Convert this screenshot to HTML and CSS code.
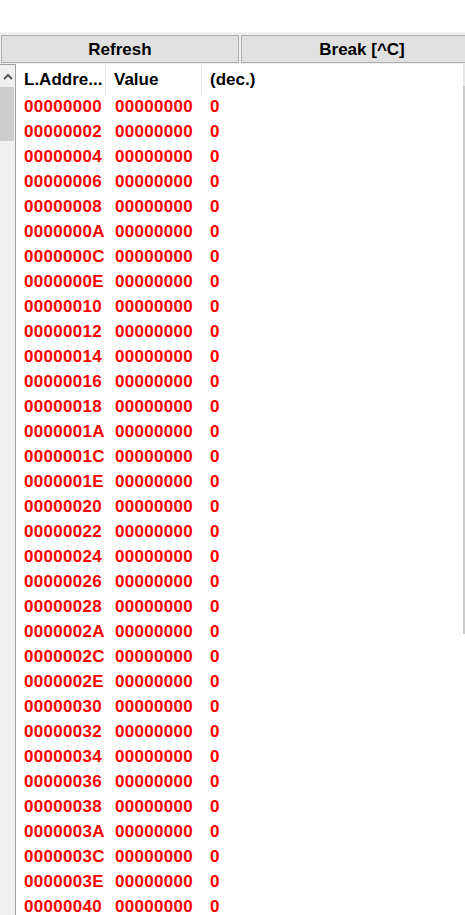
FILE: index.html
```html
<!DOCTYPE html>
<html>
<head>
<meta charset="utf-8">
<link rel="stylesheet" href="styles.css">
</head>
<body>
<div class="topspace"></div>
<div class="toolbar">
  <div class="btn">Refresh</div>
  <div class="btn">Break [^C]</div>
</div>
<div class="main">
  <div class="lstrip">
    <div class="arrow">
      <svg width="10" height="7" viewBox="0 0 10 7"><path d="M1 6 L5 2 L9 6" fill="none" stroke="#505050" stroke-width="1.8"/></svg>
    </div>
    <div class="lthumb"></div>
  </div>
  <div class="list">
    <div class="row header">
      <div class="c1">L.Addre...</div>
      <div class="c2">Value</div>
      <div class="c3">(dec.)</div>
    </div>
    <div id="rows"></div>
  </div>
  <div class="rstrip">
    <div class="rtop"></div>
    <div class="rthumb"></div>
  </div>
</div>
<script>
  var html = '';
  for (var i = 0; i <= 0x40; i += 2) {
    var a = i.toString(16).toUpperCase();
    while (a.length < 8) a = '0' + a;
    html += '<div class="row data"><div class="c1">' + a + '</div><div class="c2">00000000</div><div class="c3">0</div></div>';
  }
  document.getElementById('rows').innerHTML = html;
</script>
</body>
</html>
```

FILE: styles.css
```css
html, body {
  margin: 0;
  padding: 0;
  background: #ffffff;
  overflow: hidden;
  width: 465px;
  height: 915px;
}
body {
  font-family: "Liberation Sans", Arial, sans-serif;
  font-weight: bold;
  font-size: 17px;
}
.topspace {
  height: 32px;
  background: #ffffff;
}
.toolbar {
  height: 32px;
  box-sizing: border-box;
  background: #f0f0f0;
  display: flex;
  gap: 2px;
  padding: 3px 0 0 1px;
  overflow: hidden;
}
.btn {
  flex: 0 0 auto;
  width: 238px;
  height: 28px;
  box-sizing: border-box;
  border: 1px solid #adadad;
  background: #e1e1e1;
  color: #000000;
  display: flex;
  align-items: center;
  justify-content: center;
  padding-top: 2px;
}
.btn + .btn {
  width: 242px;
}
.main {
  display: flex;
  height: 851px;
}
.lstrip {
  width: 15px;
  border-right: 1px solid #a0a0a0;
  border-top: 1px solid #a0a0a0;
  background: #f0f0f0;
  display: flex;
  flex-direction: column;
}
.arrow {
  height: 22px;
  display: flex;
  justify-content: center;
  padding-top: 8px;
  box-sizing: border-box;
}
.lthumb {
  height: 54px;
  margin-right: 1px;
  background: #cdcdcd;
}
.list {
  flex: 1;
  overflow: hidden;
}
.row {
  display: flex;
  height: 25px;
  align-items: center;
  white-space: nowrap;
}
.row.header {
  height: 30px;
  color: #000000;
  padding-top: 1px;
  box-sizing: border-box;
}
.row.data {
  color: #ff0000;
  letter-spacing: 0.3px;
}
.c1 {
  width: 90px;
  box-sizing: border-box;
  padding-left: 8px;
}
.c2 {
  width: 96px;
  box-sizing: border-box;
  padding-left: 9px;
}
.c3 {
  padding-left: 8px;
}
.header .c1, .header .c2 {
  height: 28px;
  display: flex;
  align-items: center;
  border-right: 1px solid #e5e5e5;
}
.header .c2 {
  padding-left: 8px;
}
.rstrip {
  width: 2px;
  display: flex;
  flex-direction: column;
}
.rtop {
  height: 22px;
  background: #e8e8e8;
}
.rthumb {
  height: 548px;
  background: #cdcdcd;
}
```
